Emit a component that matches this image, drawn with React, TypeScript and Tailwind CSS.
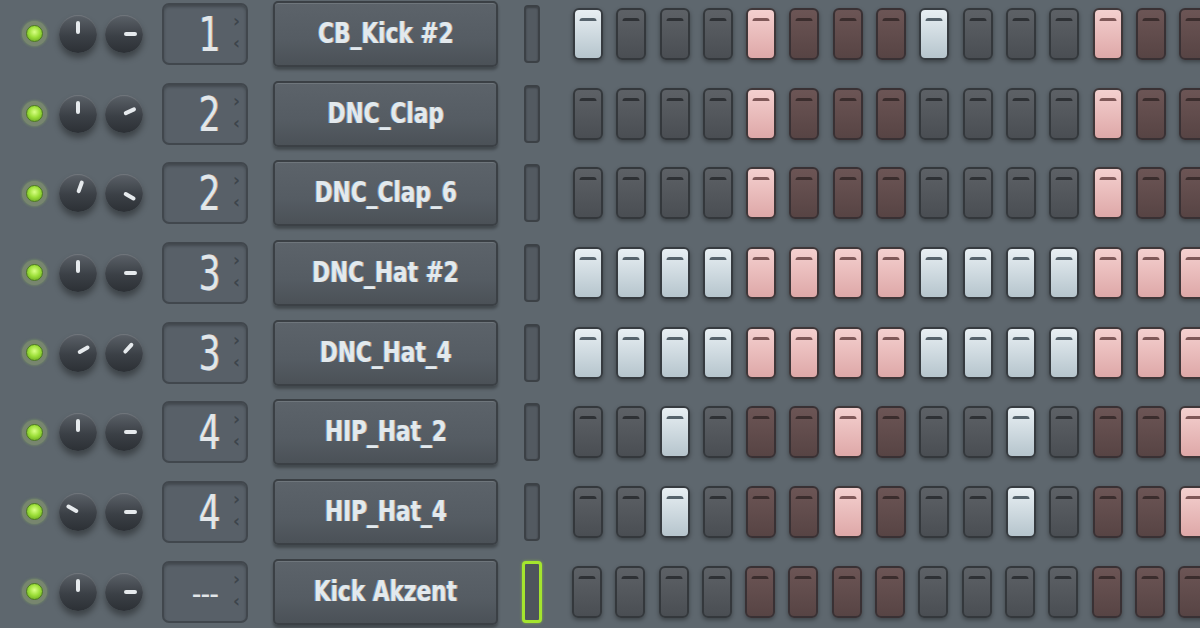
const rows = [
  { num: '1', name: 'CB_Kick #2', k1: 0, k2: 90, pattern: '1000100010001000' },
  { num: '2', name: 'DNC_Clap', k1: 0, k2: 65, pattern: '0000100000001000' },
  { num: '2', name: 'DNC_Clap_6', k1: 20, k2: 120, pattern: '0000100000001000' },
  { num: '3', name: 'DNC_Hat #2', k1: 0, k2: 90, pattern: '1111111111111111' },
  { num: '3', name: 'DNC_Hat_4', k1: 60, k2: 42, pattern: '1111111111111111' },
  { num: '4', name: 'HIP_Hat_2', k1: 0, k2: 90, pattern: '0010001000100010' },
  { num: '4', name: 'HIP_Hat_4', k1: -60, k2: 90, pattern: '0010001000100010' },
  { num: '---', name: 'Kick Akzent', k1: 0, k2: 90, pattern: '0000000000000000', selected: true },
];

// step look by (group colour, on/off)
const stepStyles = {
  grayOff: 'from-[#5d6166] to-[#4a4e53] border-[#34383c]',
  brownOff: 'from-[#6c5555] to-[#574444] border-[#393134]',
  pinkOn: 'from-[#f4d0cf] to-[#dea8a8] border-[#3f3739]',
  blueOn: 'from-[#e8eff3] to-[#b6c5cd] border-[#363b40]',
};

const notchStyles = {
  grayOff: 'bg-[#2e3135]',
  brownOff: 'bg-[#3b2d2d]',
  pinkOn: 'bg-[#7f5858]',
  blueOn: 'bg-[#56636c]',
};

function Led() {
  return (
    <div className="w-[25px] h-[25px] rounded-full bg-[#78866f] flex items-center justify-center shadow-[0_0_3px_rgba(150,200,90,0.5)]">
      <div className="w-[17px] h-[17px] rounded-full border border-[#4d7a22] bg-[radial-gradient(circle_at_50%_40%,#d9ff86_0%,#9ee03a_45%,#5f9c1c_100%)]" />
    </div>
  );
}

function Knob({ angle }: { angle: number }) {
  return (
    <div className="relative w-[38px] h-[38px] rounded-full bg-[linear-gradient(180deg,#5b6168_0%,#3b4046_55%,#2c3035_100%)] shadow-[0_5px_6px_rgba(0,0,0,0.35),inset_0_1px_1px_rgba(255,255,255,0.15)]">
      <div className="absolute inset-0" style={{ transform: `rotate(${angle}deg)` }}>
        <div className="absolute left-1/2 top-[6px] -translate-x-1/2 w-[4px] h-[13px] rounded-full bg-[#e6eaed]" />
      </div>
    </div>
  );
}

function NumberBox({ num }: { num: string }) {
  return (
    <div className="relative w-[86px] h-[62px] rounded-[7px] border-2 border-[#41474d] bg-[#586068] shadow-[inset_0_2px_3px_rgba(0,0,0,0.25)] flex items-center justify-end pr-[26px]">
      {num === '---' ? (
        <span className="font-['DejaVu_Sans_Condensed','DejaVu_Sans',sans-serif] text-[30px] text-[#e2e6e9] tracking-[-1px] mt-[4px] mr-[2px]">
          ---
        </span>
      ) : (
        <span className="origin-right scale-x-[0.8] font-['DejaVu_Sans_ExtraLight','DejaVu_Sans_Condensed','DejaVu_Sans',sans-serif] text-[48px] leading-none font-extralight text-[#e2e6e9] [text-shadow:-1px_0_0_#4f7ea8,1px_0_0_#c59a7a]">
          {num}
        </span>
      )}
      <div className="absolute right-[6px] top-[10px] flex flex-col items-center gap-[9px] text-[#3d444b] text-[17px] font-['DejaVu_Sans',sans-serif] font-bold">
        <span className="block h-[13px] leading-[13px]">›</span>
        <span className="block h-[13px] leading-[13px]">‹</span>
      </div>
    </div>
  );
}

function NameButton({ name }: { name: string }) {
  return (
    <div className="w-[225px] h-[66px] rounded-[5px] border-2 border-[#3b4045] bg-[linear-gradient(180deg,#5c636a_0%,#555c63_60%,#4b5157_100%)] shadow-[0_3px_3px_rgba(0,0,0,0.3),inset_0_1px_0_rgba(255,255,255,0.12)] flex items-center justify-center">
      <span className="scale-x-[0.86] whitespace-nowrap font-['DejaVu_Sans_Condensed','DejaVu_Sans',sans-serif] font-bold text-[28px] text-[#e3e9ed] [text-shadow:-1px_0_0_#6c9bc4,1px_0_0_#c9a486]">
        {name}
      </span>
    </div>
  );
}

function SelectBar({ selected }: { selected?: boolean }) {
  return selected ? (
    <div className="w-[20px] h-[62px] rounded-[4px] border-[3px] border-[#a4e52e] bg-[#4e555c] shadow-[0_0_3px_rgba(164,229,46,0.6)]" />
  ) : (
    <div className="w-[16px] h-[58px] rounded-[4px] border-2 border-[#3c4146] bg-[#535a61] shadow-[inset_0_1px_2px_rgba(0,0,0,0.3)]" />
  );
}

function Step({ kind }: { kind: keyof typeof stepStyles }) {
  return (
    <div
      className={`relative shrink-0 w-[30px] h-[52px] rounded-[6px] border-2 bg-gradient-to-b shadow-[0_2px_4px_rgba(0,0,0,0.35)] ${stepStyles[kind]}`}
    >
      <div className={`absolute left-1/2 top-[8px] -translate-x-1/2 w-[17px] h-[3px] rounded-t-full ${notchStyles[kind]}`} />
    </div>
  );
}

export default function App() {
  return (
    <div className="w-[1200px] h-[628px] overflow-hidden bg-[#5e676e]">
      <div className="mt-[-6px] flex flex-col">
        {rows.map((row, r) => (
          <div key={r} className="h-[79.7px] flex items-center">
            <div className="ml-[22px]">
              <Led />
            </div>
            <div className="ml-[12px] flex gap-[8px]">
              <Knob angle={row.k1} />
              <Knob angle={row.k2} />
            </div>
            <div className="ml-[19px]">
              <NumberBox num={row.num} />
            </div>
            <div className="ml-[25px]">
              <NameButton name={row.name} />
            </div>
            <div className={row.selected ? 'ml-[24px] mr-[30px]' : 'ml-[26px] mr-[33px]'}>
              <SelectBar selected={row.selected} />
            </div>
            <div className="flex gap-[13.3px]">
              {row.pattern.split('').map((c, i) => {
                const brown = Math.floor(i / 4) % 2 === 1;
                const on = c === '1';
                const kind = on ? (brown ? 'pinkOn' : 'blueOn') : brown ? 'brownOff' : 'grayOff';
                return <Step key={i} kind={kind} />;
              })}
            </div>
          </div>
        ))}
      </div>
    </div>
  );
}
